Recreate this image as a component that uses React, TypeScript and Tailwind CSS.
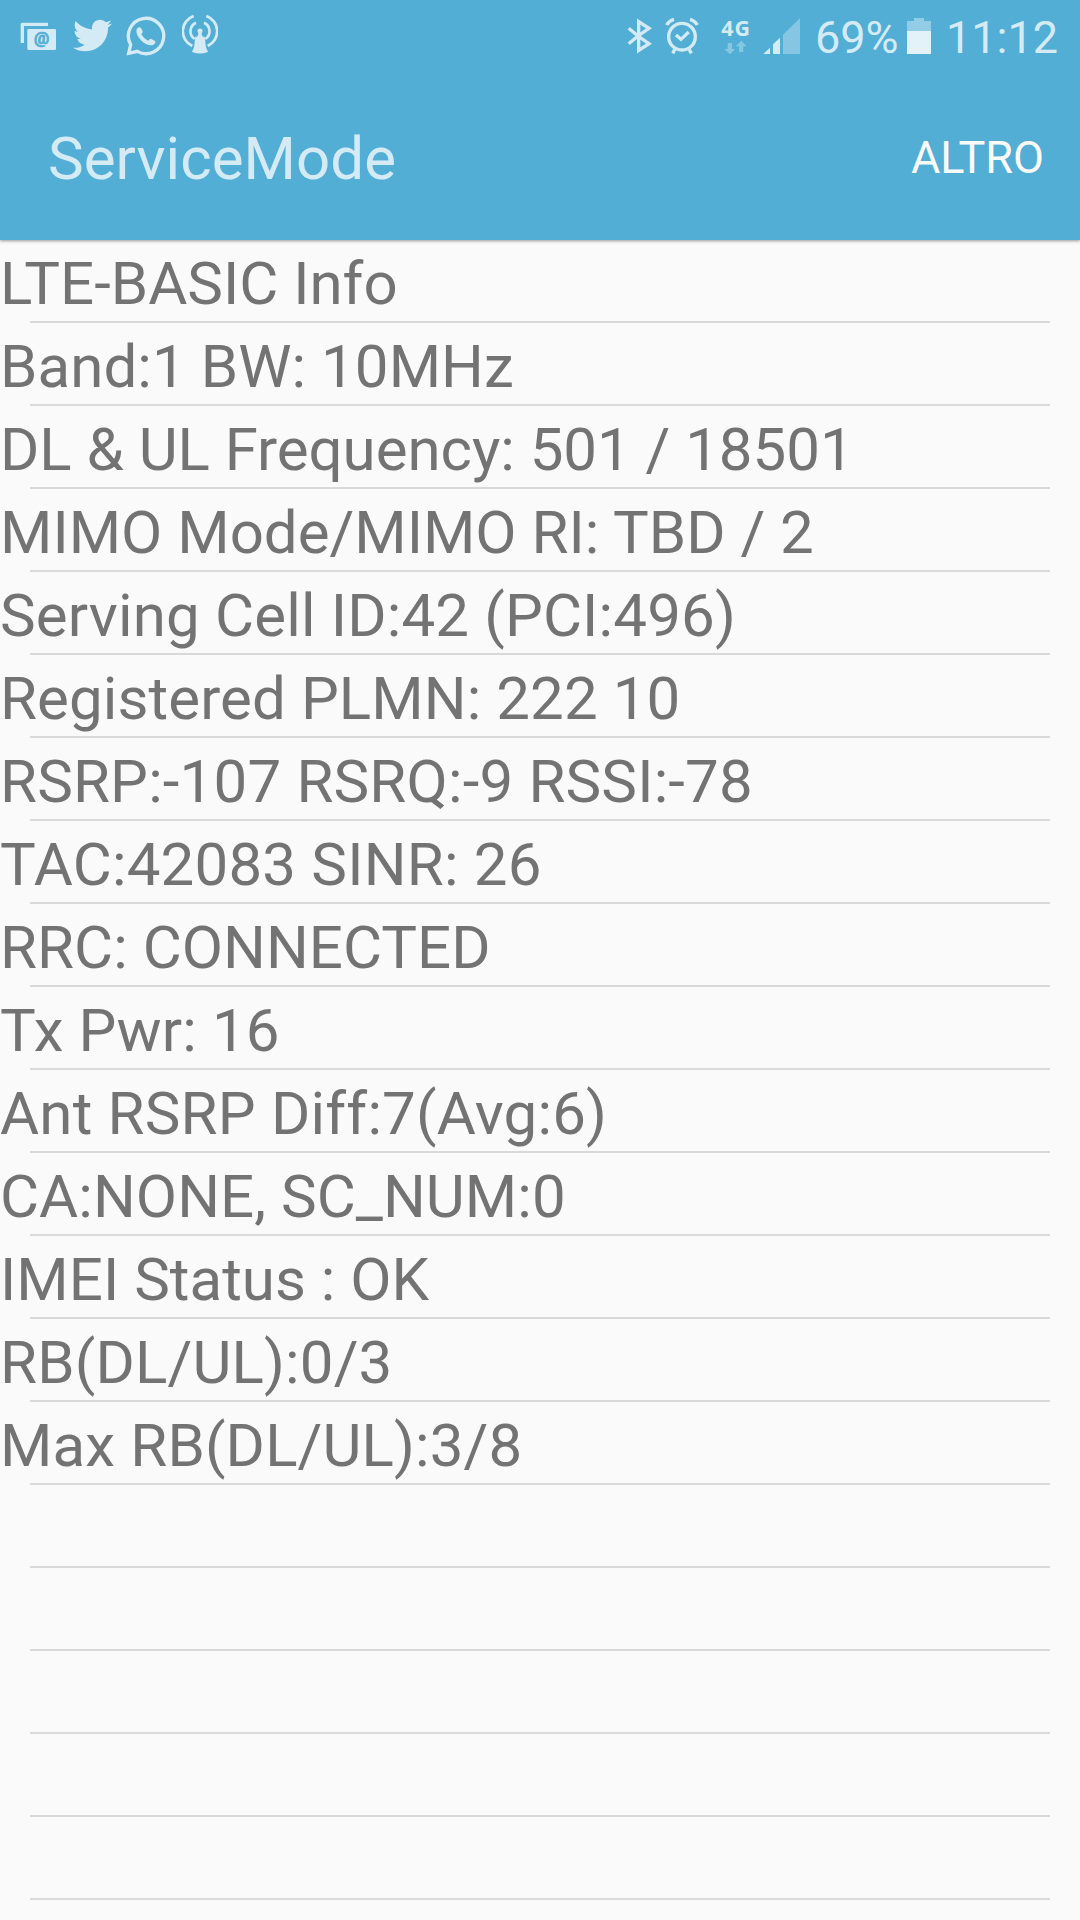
import React from "react";
import { FaTwitter } from "react-icons/fa";

const rows = [
  { text: "LTE-BASIC Info", tracking: "" },
  { text: "Band:1 BW: 10MHz", tracking: "tracking-[0.08px]" },
  { text: "DL & UL Frequency: 501 / 18501", tracking: "tracking-[-0.03px]" },
  { text: "MIMO Mode/MIMO RI: TBD / 2", tracking: "" },
  { text: "Serving Cell ID:42 (PCI:496)", tracking: "tracking-[0.16px]" },
  { text: "Registered PLMN: 222 10", tracking: "tracking-[0.1px]" },
  { text: "RSRP:-107 RSRQ:-9 RSSI:-78", tracking: "tracking-[0.18px]" },
  { text: "TAC:42083 SINR: 26", tracking: "tracking-[0.2px]" },
  { text: "RRC: CONNECTED", tracking: "tracking-[0.05px]" },
  { text: "Tx Pwr: 16", tracking: "tracking-[0.14px]" },
  { text: "Ant RSRP Diff:7(Avg:6)", tracking: "tracking-[0.2px]" },
  { text: "CA:NONE, SC_NUM:0", tracking: "tracking-[0.07px]" },
  { text: "IMEI Status : OK", tracking: "tracking-[0.03px]" },
  { text: "RB(DL/UL):0/3", tracking: "tracking-[0.18px]" },
  { text: "Max RB(DL/UL):3/8", tracking: "tracking-[0.15px]" },
  { text: "", tracking: "" },
  { text: "", tracking: "" },
  { text: "", tracking: "" },
  { text: "", tracking: "" },
  { text: "", tracking: "" },
];

function MailIcon() {
  return (
    <svg className="h-[41px] w-9" viewBox="60 45 108 123" fill="currentColor">
      <path d="M62 129V73q0-5 5-5H144V78H72V129Z" />
      <rect x="82" y="87" width="86" height="63" rx="4" />
      <text
        x="124.500"
        y="132"
        textAnchor="middle"
        fontSize="51"
        fontWeight="700"
        fill="#52aed5"
        stroke="#52aed5"
        strokeWidth="2"
        fontFamily="Roboto, sans-serif"
      >
        @
      </text>
    </svg>
  );
}

function WhatsAppIcon() {
  return (
    <svg className="ml-[14px] h-[41px] w-10" viewBox="378 45 120 123" fill="none">
      <path
        d="M386 160L392 134A53 53 0 1 1 412 154Z"
        stroke="currentColor"
        strokeWidth="10"
      />
      <path
        d="M412 85C415 81 421 80 423 84L428 94C429 97 426 100 424 103C429 112 436 118 445 122C449 118 451 115 454 117L465 123C468 126 465 132 460 134C438 143 404 109 410 88Z"
        fill="currentColor"
      />
    </svg>
  );
}

function AntennaIcon() {
  return (
    <svg
      className="ml-4 h-[41px] w-9"
      viewBox="546 45 108 123"
      fill="none"
      stroke="currentColor"
      strokeWidth="8"
    >
      <path d="M581 48A48.500 48.500 0 0 0 577 138M619 48A48.500 48.500 0 0 1 623 138" />
      <path d="M588 68A28 28 0 0 0 584 117M612 68A28 28 0 0 1 616 117" />
      <circle cx="600" cy="93" r="7.500" fill="currentColor" stroke="none" />
      <path
        d="M596 98H604L608 110H614L618 142L624 156Q600 165 576 156L582 142L586 110H592Z"
        fill="currentColor"
        stroke="none"
      />
    </svg>
  );
}

function BluetoothIcon() {
  return (
    <svg
      className="h-[41px] w-[25px]"
      viewBox="51 45 75 123"
      fill="none"
      stroke="currentColor"
      strokeWidth="10"
    >
      <path d="M56 85L84 108L117 131L86 151V65L117 85L84 108L56 131" />
    </svg>
  );
}

function AlarmIcon() {
  return (
    <svg
      className="ml-[13px] h-[41px] w-[34px]"
      viewBox="165 45 102 123"
      fill="none"
      stroke="currentColor"
      strokeWidth="10"
    >
      <circle cx="216" cy="110" r="40" />
      <path d="M198 105L213 118L236 96" />
      <path d="M170 75Q177 62 192 58M262 75Q255 62 240 58" />
      <path d="M194 149L188 160M238 149L244 160" />
    </svg>
  );
}

function NetworkIcon() {
  return (
    <svg
      className="ml-[22px] h-[41px] w-[30px] overflow-visible"
      viewBox="333 45 90 123"
      fill="currentColor"
    >
      <text
        x="334"
        y="107"
        fontSize="64"
        fontWeight="700"
        letterSpacing="3"
        fontFamily="'Noto Sans', 'Open Sans', sans-serif"
      >
        4G
      </text>
      <path
        opacity="0.4"
        d="M353 129H366V147H376L360 163L343 147H353ZM387 156H400V139H410L394 122L377 139H387Z"
      />
    </svg>
  );
}

function SignalIcon() {
  return (
    <svg className="ml-3 h-[41px] w-[38px]" viewBox="459 45 114 123" fill="currentColor">
      <path d="M460 162L480 143V162Z" />
      <path d="M489 162V133L510 113V162Z" />
      <path d="M519 162V104L570 54V162Z" opacity="0.4" />
    </svg>
  );
}

function BatteryIcon() {
  return (
    <svg className="h-[41px] w-6" viewBox="201 45 72 123" fill="currentColor">
      <path d="M201 93V63H222V54H252V63H273V93Z" opacity="0.5" />
      <rect x="201" y="93" width="72" height="69" fill="#e3f2f8" />
    </svg>
  );
}

function StatusBar() {
  return (
    <div className="flex h-[72px] items-start justify-between pt-[15px] pr-[21px] pl-5 text-[#d4ebf5]">
      <div className="flex">
        <MailIcon />
        <FaTwitter className="mt-px ml-[17px] h-[39px] w-[39px]" />
        <WhatsAppIcon />
        <AntennaIcon />
      </div>
      <div className="flex">
        <BluetoothIcon />
        <AlarmIcon />
        <NetworkIcon />
        <SignalIcon />
        <span className="ml-[14px] w-[92px] text-[45px] leading-[45px] whitespace-nowrap">69%</span>
        <BatteryIcon />
        <span className="ml-[15px] w-[113px] text-[45px] leading-[45px] whitespace-nowrap">11:12</span>
      </div>
    </div>
  );
}

export default function App() {
  return (
    <div className="flex h-[1920px] w-[1080px] flex-col overflow-hidden bg-[#fafafa] font-[Roboto,sans-serif]">
      <header className="relative h-60 shrink-0 bg-[#52aed5] shadow-[0_1px_3px_rgba(0,0,0,0.4)]">
        <StatusBar />
        <div className="flex h-[168px] items-start justify-between pr-9 pl-12">
          <h1 className="pt-[51px] text-[60px] leading-[71px] tracking-[0.06px] text-[#d4ebf5]">
            ServiceMode
          </h1>
          <button className="pt-[59px] text-[45px] leading-[53px] text-[#fafafa]">ALTRO</button>
        </div>
      </header>
      <ul>
        {rows.map((row, i) => (
          <li key={i}>
            <div
              className={`h-[81px] pt-[6px] text-[60px] leading-[75px] whitespace-nowrap text-[#737373] ${row.tracking}`}
            >
              {row.text}
            </div>
            <div className="mx-[30px] h-0.5 bg-[#d9d9d9]" />
          </li>
        ))}
      </ul>
    </div>
  );
}
